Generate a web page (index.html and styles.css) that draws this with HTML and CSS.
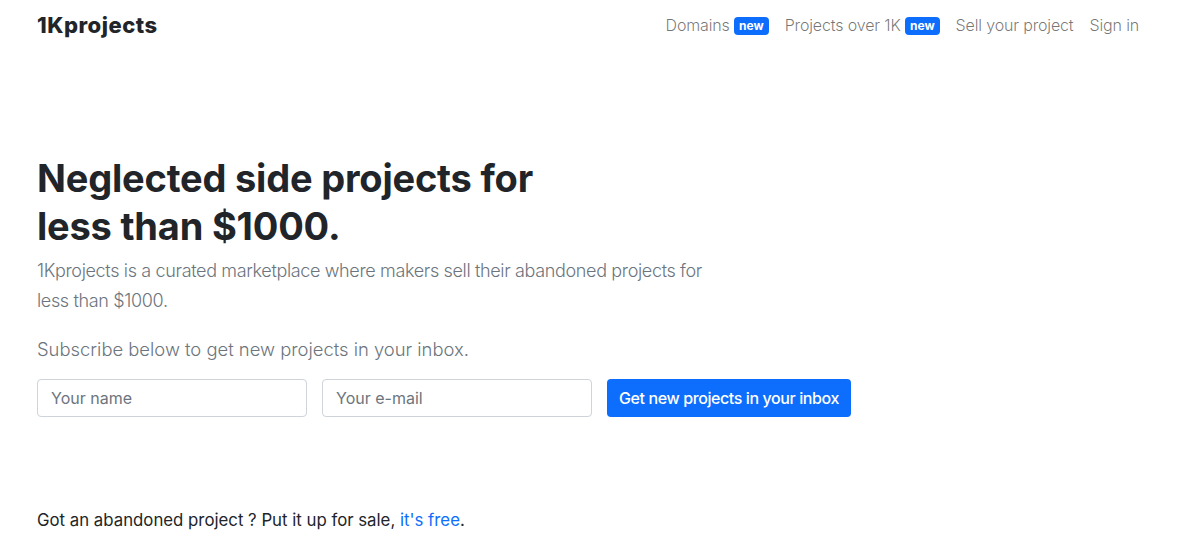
FILE: index.html
```html
<!DOCTYPE html>
<html lang="en">
<head>
<meta charset="utf-8">
<title>1Kprojects</title>
<link rel="stylesheet" href="styles.css">
</head>
<body>
<div class="container">
  <header class="navbar">
    <a class="brand" href="#">1Kprojects</a>
    <nav class="nav">
      <a class="nav-link" href="#">Domains <span class="badge">new</span></a>
      <a class="nav-link" href="#">Projects over 1K <span class="badge">new</span></a>
      <a class="nav-link" href="#">Sell your project</a>
      <a class="nav-link" href="#">Sign in</a>
    </nav>
  </header>
  <main class="hero">
    <h1 class="title">Neglected side projects for less than $1000.</h1>
    <p class="lead">1Kprojects is a curated marketplace where makers sell their abandoned projects for less than $1000.</p>
    <p class="lead sub">Subscribe below to get new projects in your inbox.</p>
    <form class="subscribe">
      <input class="field" type="text" placeholder="Your name">
      <input class="field" type="email" placeholder="Your e-mail">
      <button class="btn" type="button">Get new projects in your inbox</button>
    </form>
    <p class="sell">Got an abandoned project ? Put it up for sale, <a href="#">it's free</a>.</p>
  </main>
</div>
</body>
</html>
```
FILE: styles.css
```css
* { box-sizing: border-box; }
html, body { margin: 0; padding: 0; background: #fff; }
body {
  font-family: Inter, "Liberation Sans", sans-serif;
  color: #212529;
  font-size: 16px;
  line-height: 1.5;
}
.container {
  padding: 0 33px 0 37px;
}
.navbar {
  display: flex;
  justify-content: space-between;
  align-items: center;
  height: 50px;
}
.brand {
  font-size: 22px;
  font-weight: 800;
  color: #212529;
  text-decoration: none;
  letter-spacing: 0.5px;
}
.nav { display: flex; }
.nav-link {
  color: rgba(0,0,0,.55);
  text-decoration: none;
  padding: 0 8px;
  font-size: 16px;
  font-weight: 300;
  letter-spacing: -0.15px;
}
.nav-link:last-child { padding-right: 10px; }
.badge {
  display: inline-block;
  background: #0d6efd;
  color: #fff;
  font-size: 12px;
  font-weight: 700;
  line-height: 1;
  letter-spacing: 0;
  padding: 3px 5px;
  border-radius: 4px;
  vertical-align: 1px;
}
.hero { padding-top: 104px; }
.title {
  font-size: 38px;
  font-weight: 700;
  line-height: 48px;
  margin: 0;
  width: 546px;
  letter-spacing: -0.2px;
}
.lead {
  font-size: 18px;
  font-weight: 300;
  color: #6c757d;
  line-height: 30px;
  margin: 6px 0 0;
  width: 690px;
  letter-spacing: -0.35px;
}
.lead.sub {
  margin-top: 18px;
  font-size: 18.4px;
  letter-spacing: 0;
}
.subscribe {
  display: flex;
  gap: 15px;
  margin-top: 15px;
}
.field {
  width: 270px;
  height: 38px;
  border: 1px solid #ced4da;
  border-radius: 4px;
  padding: 6px 13px;
  font-family: inherit;
  font-size: 16px;
  color: #212529;
}
.field::placeholder { color: #6c757d; }
.btn {
  width: 244px;
  height: 38px;
  background: #0d6efd;
  color: #fff;
  border: 0;
  border-radius: 4px;
  padding: 0 12px;
  font-family: inherit;
  font-size: 16px;
  font-weight: 500;
  letter-spacing: -0.4px;
}
.sell {
  margin: 91px 0 0;
  font-size: 16.8px;
  font-weight: 400;
}
.sell a { color: #0d6efd; text-decoration: none; }
```
